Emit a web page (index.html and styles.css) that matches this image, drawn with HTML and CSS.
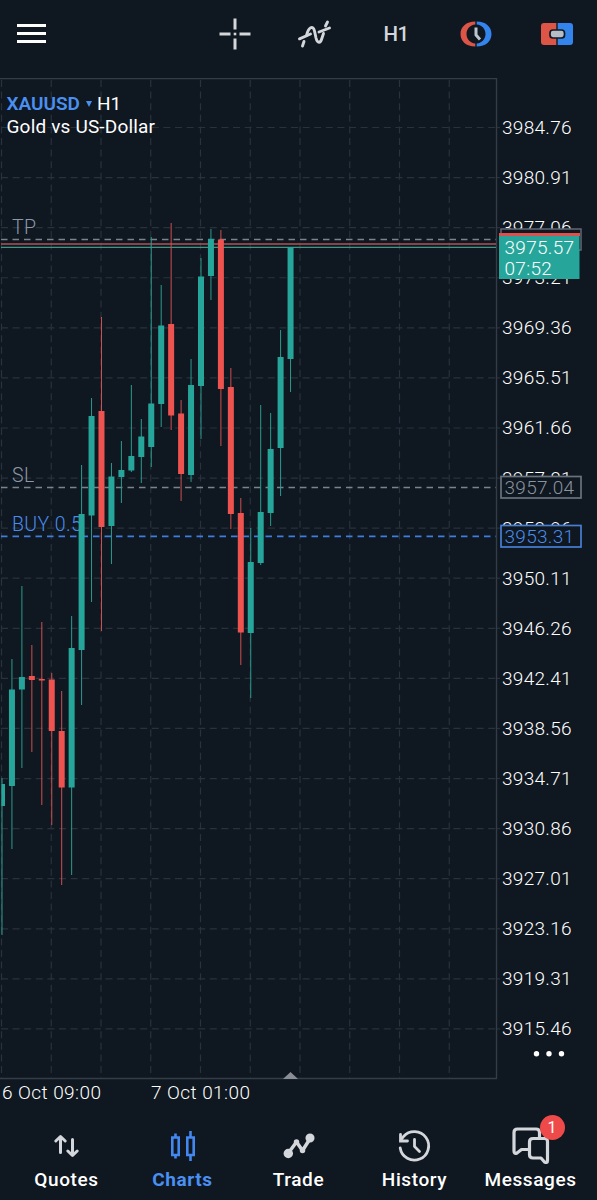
FILE: index.html
```html
<!DOCTYPE html>
<html lang="en">
<head>
    <meta charset="UTF-8">
    <meta name="viewport" content="width=device-width, initial-scale=1.0">
    <title>XAUUSD H1</title>
    <link rel="stylesheet" href="styles.css">
</head>
<body>
    <header class="toolbar">
        <svg class="menu" width="29" height="20" viewBox="0 0 29 20">
            <path d="M0 1.5h29M0 9.5h29M0 17.5h29" stroke="#fff" stroke-width="3"/>
        </svg>
        <div class="tools">
            <svg width="32" height="32" viewBox="0 0 32 32">
                <path d="M16 .5v11M16 20.500v11M.5 16h11M20.500 16h11" stroke="#d3d6da" stroke-width="3"/>
                <rect x="14.700" y="14.700" width="2.600" height="2.600" fill="#d3d6da"/>
            </svg>
            <svg width="36" height="32" viewBox="0 0 36 32" fill="none" stroke="#d3d6da" stroke-width="2.900" stroke-linecap="round">
                <path d="M2.500 20.800L13.500 16M22 14L32.500 10"/>
                <path d="M5.500 28L7 23.500M9.500 17.500C11.500 9 16 7 17.500 13L19 20C20.500 26 23.500 25.500 25 20L26.500 15.500M28.500 8L30.500 4"/>
            </svg>
            <span class="timeframe">H1</span>
            <svg width="32" height="32" viewBox="0 0 32 32">
                <path d="M15.300 3.500C6 3.500 .5 9 .5 16S6 28.500 15.300 28.500V25.500C10 25 6.500 21 6.500 16S10 7 15.300 6.500z" fill="#dc5546"/>
                <path d="M16.700 3.500C26 3.500 31.500 9 31.500 16S26 28.500 16.700 28.500V25.500C22 25 25.500 21 25.500 16S22 7 16.700 6.500z" fill="#3484ee"/>
                <path d="M16 9.500V17L20 21.500" fill="none" stroke="#bdc5cf" stroke-width="3"/>
            </svg>
            <svg width="32" height="32" viewBox="0 0 32 32">
                <path d="M15.300 5H3a3 3 0 0 0-3 3v16a3 3 0 0 0 3 3h12.300z" fill="#dc5546"/>
                <path d="M16.700 5H29a3 3 0 0 1 3 3v16a3 3 0 0 1-3 3H16.700z" fill="#3484ee"/>
                <rect x="9" y="12" width="14.500" height="8" rx="3" fill="#b6bdc6" stroke="#101820" stroke-width="1.700"/>
            </svg>
        </div>
    </header>

    <main>
        <svg class="chart" width="597" height="1032" viewBox="0 78 597 1032">
            <g id="grid"></g>
            <path class="frame" d="M0 78.500H496.500V1078.500H0"/>
            <path d="M283 1079l7.500-7 7.500 7z" fill="#8a8e94"/>

            <g class="labels">
                <text class="symbol" x="6.500" y="110" textLength="73.500">XAUUSD</text>
                <path d="M86 101h6l-3 6z" fill="#4a90f0"/>
                <text x="97" y="110">H1</text>
                <text x="6.500" y="133" textLength="148.500">Gold vs US-Dollar</text>
            </g>

            <g class="level">
                <text x="12" y="233.500">TP</text>
                <text x="12" y="481.500">SL</text>
                <text class="buy" x="12" y="530.500">BUY 0.5</text>
            </g>
            <path class="dash" d="M1 239.500H496"/>
            <path class="dash" d="M1 487.500H496"/>
            <path class="dash buy-line" d="M1 536.300H496"/>
            <path d="M1 244H496" stroke="#b35355" stroke-width="1.300"/>
            <path d="M1 247.300H496" stroke="#3d9788" stroke-width="1.300"/>

            <g id="candles"></g>
            <g id="prices" class="axis"></g>

            <!-- price tags -->
            <rect x="501" y="229" width="80" height="21" fill="#0f1720" stroke="#606974" stroke-width="1.500"/>
            <rect x="499" y="236" width="80.500" height="43" fill="#26a69a"/>
            <rect x="499" y="233" width="81" height="3" fill="#dc5050"/>
            <g class="axis">
                <text x="504.500" y="253.500">3975.57</text>
                <text x="504.500" y="275">07:52</text>
            </g>
            <g class="tag">
                <rect x="501" y="476.500" width="80" height="21.500"/>
                <text x="504.500" y="494">3957.04</text>
            </g>
            <g class="tag tag-buy">
                <rect x="501" y="525.500" width="80" height="21.500"/>
                <text x="504.500" y="543">3953.31</text>
            </g>

            <g fill="#fff">
                <circle cx="536.500" cy="1053.700" r="2.700"/>
                <circle cx="549" cy="1053.700" r="2.700"/>
                <circle cx="561.500" cy="1053.700" r="2.700"/>
            </g>

            <g class="dates">
                <text x="2" y="1099" textLength="99">6 Oct 09:00</text>
                <text x="151" y="1099" textLength="99">7 Oct 01:00</text>
            </g>
        </svg>
    </main>

    <nav class="tabs">
        <a class="tab">
            <svg width="40" height="40" viewBox="0 0 40 40" fill="none" stroke="#d3d6da" stroke-width="3" stroke-linecap="round" stroke-linejoin="round">
                <path d="M13.500 26.500V11.500M8.800 15L13.500 10.500L18.200 15M25.500 13.500V28.500M20.800 25L25.500 29.500L30.200 25"/>
            </svg>
            <span>Quotes</span>
        </a>
        <a class="tab active">
            <svg width="40" height="40" viewBox="0 0 40 40" fill="none" stroke="#4388f0" stroke-width="2.600">
                <path d="M9.300 11.500h6.400v17.500h-6.400zM12.500 7.500v4M12.500 29v3.500M24.300 11.500h6.400v17.500h-6.400zM27.500 5v6.500M27.500 29v6"/>
            </svg>
            <span>Charts</span>
        </a>
        <a class="tab">
            <svg width="40" height="40" viewBox="0 0 40 40" fill="#d3d6da" stroke="#d3d6da" stroke-width="3.500" stroke-linejoin="round">
                <path d="M9 27.500L17.500 16L23.500 24.500L31.500 12" fill="none"/>
                <circle cx="9.300" cy="27.500" r="3"/>
                <circle cx="31" cy="12" r="2.800"/>
                <circle cx="17.500" cy="16" r="1"/>
                <circle cx="23.500" cy="24.500" r="1"/>
            </svg>
            <span>Trade</span>
        </a>
        <a class="tab">
            <svg width="40" height="40" viewBox="0 0 40 40" fill="none" stroke="#d3d6da" stroke-width="2.800" stroke-linecap="round">
                <path d="M5.200 22A14.300 14.300 0 1 0 8.500 10.500L6 14"/>
                <path d="M5.500 8.500V15H12.500M19.500 13.500V20.500L24.500 25.500"/>
            </svg>
            <span>History</span>
        </a>
        <a class="tab">
            <svg width="40" height="40" viewBox="0 0 40 40" fill="none" stroke="#d3d6da" stroke-width="3.200" stroke-linejoin="round">
                <path d="M17 23.500H10.500L6 27Q3 28.500 3 25V6.500Q3 3 6.500 3H25Q28.500 3 28.500 6.500V12"/>
                <path d="M22 12.500H33.500Q36.500 12.500 36.500 15.500V34.500Q36.500 37.500 33.500 36L30 32H22Q18.500 32 18.500 28.500V16Q18.500 12.500 22 12.500Z"/>
            </svg>
            <span>Messages</span>
            <b class="badge">1</b>
        </a>
    </nav>

    <script>
        // [top of wick, top of body, bottom of body, bottom of wick, up]
        const candles = [
            [778, 784, 806, 935, 1],
            [659, 689.5, 786, 849, 1],
            [586, 677, 689.5, 768, 1],
            [645, 676, 680, 752, 0],
            [622, 679, 680.5, 805, 0],
            [673, 679.5, 731, 825, 0],
            [691, 731, 787.5, 885, 0],
            [616, 648, 787.5, 875, 1],
            [465, 514, 650, 705, 1],
            [398, 416, 515.5, 602, 1],
            [317, 411, 527, 631, 0],
            [463, 476.5, 526, 564, 1],
            [441, 470, 477, 503, 1],
            [385, 456, 470.5, 472, 1],
            [419, 436.5, 457, 483, 1],
            [237, 403.5, 447, 467, 1],
            [285, 325.5, 404, 427, 1],
            [223, 324, 415.5, 430, 0],
            [400, 413.5, 474, 501, 0],
            [359, 385, 475, 482, 1],
            [258, 276.5, 386, 439, 1],
            [229, 239, 276, 300, 1],
            [230, 239.5, 389, 446, 0],
            [368, 387, 514, 529, 0],
            [498, 513, 632.5, 665, 0],
            [528, 562, 633, 698, 1],
            [405, 512, 563, 565, 1],
            [413, 449, 513, 526, 1],
            [330, 357, 448, 496, 1],
            [247, 247, 359, 392, 1]
        ];

        let grid = "";
        let prices = "";
        for (let i = 0; i < 10; i++) {
            const x = 1.5 + i * 49.75;
            grid += `<path d="M${x} 80V1078"/>`;
        }
        for (let i = 0; i < 19; i++) {
            const y = 127.5 + i * 50.08;
            grid += `<path d="M1 ${y}H496"/>`;
            grid += `<path class="tick" d="M496 ${y}h4"/>`;
            prices += `<text x="502" y="${y + 6.5}">${(3984.76 - i * 3.85).toFixed(2)}</text>`;
        }
        document.getElementById("grid").innerHTML = grid;
        document.getElementById("prices").innerHTML = prices;

        let bars = "";
        candles.forEach(([high, top, bottom, low, up], i) => {
            const x = 2 + i * 9.95;
            // the first candle is cut by the left edge of the chart
            const left = i === 0 ? 1.5 : x - 3;
            const width = i === 0 ? 3.5 : 6;
            bars +=
            `<g class="${up ? "up" : "down"}">
                <path d="M${x} ${high}V${low}"/>
                <rect x="${left}" y="${top}" width="${width}" height="${bottom - top}"/>
            </g>`;
        });
        document.getElementById("candles").innerHTML = bars;
    </script>
</body>
</html>
```

FILE: styles.css
```css
body {
    margin: 0;
    height: 1200px;
    background-color: #0f1720;
    color: white;
    font-family: Roboto, "Liberation Sans", sans-serif;
    overflow: hidden;
}

svg {
    display: block;
}

.toolbar {
    display: flex;
    align-items: center;
    justify-content: space-between;
    height: 78px;
    padding: 0 24px 11px 17px;
    box-sizing: border-box;
}

.tools {
    display: grid;
    grid-template-columns: 78px 83px 80px 81px 32px;
    align-items: center;
    width: 354px;
}

.timeframe {
    width: 32px;
    color: #d3d6da;
    font-size: 20.5px;
    font-weight: 500;
    letter-spacing: -0.5px;
    text-align: center;
}

#grid path {
    stroke: #29323c;
    stroke-width: 1.2;
    stroke-dasharray: 7 4.6;
}

#grid .tick {
    stroke-dasharray: none;
}

.frame {
    fill: none;
    stroke: #343d47;
    stroke-width: 1.4;
}

.labels text {
    fill: white;
    font-size: 19px;
}

.labels .symbol {
    fill: #4a90f0;
    font-weight: 600;
}

.level text {
    fill: #8c98a8;
    font-size: 19.5px;
    font-weight: 350;
    letter-spacing: 0.4px;
}

.level .buy {
    fill: #4a8cec;
}

.dash {
    stroke: #7b838d;
    stroke-width: 1.4;
    stroke-dasharray: 6.5 5;
}

.buy-line {
    stroke: #3f7de0;
    stroke-width: 1.8;
}

.up {
    fill: #26a69a;
    stroke: #2b9c8e;
}

.down {
    fill: #ef5350;
    stroke: #cf4f4f;
}

.up rect, .down rect {
    stroke: none;
}

.axis text, .tag text {
    fill: #fff;
    font-size: 19px;
    font-weight: 350;
    letter-spacing: 0.3px;
}

.tag rect {
    fill: #0f1720;
    stroke: #69727d;
    stroke-width: 1.7;
}

.tag text {
    fill: #8a939f;
}

.tag-buy rect {
    stroke: #477fd4;
}

.tag-buy text {
    fill: #4a8cec;
}

.dates text {
    fill: #fff;
    font-size: 19px;
    font-weight: 350;
}

.tabs {
    display: grid;
    grid-template-columns: repeat(5, 116px);
    padding-left: 8.5px;
    padding-top: 16px;
}

.tab {
    position: relative;
    display: flex;
    flex-direction: column;
    align-items: center;
    font-size: 19px;
    font-weight: 500;
    line-height: 24px;
    letter-spacing: 0.6px;
}

.tab span {
    margin-top: 2px;
}

.active {
    color: #4a8ff2;
    font-weight: 700;
}

.badge {
    position: absolute;
    top: -11px;
    left: 67px;
    width: 25px;
    height: 25px;
    border-radius: 50%;
    background-color: #ef4a4a;
    font-size: 16px;
    font-weight: 400;
    line-height: 25px;
    text-align: center;
    letter-spacing: 0;
}
```
